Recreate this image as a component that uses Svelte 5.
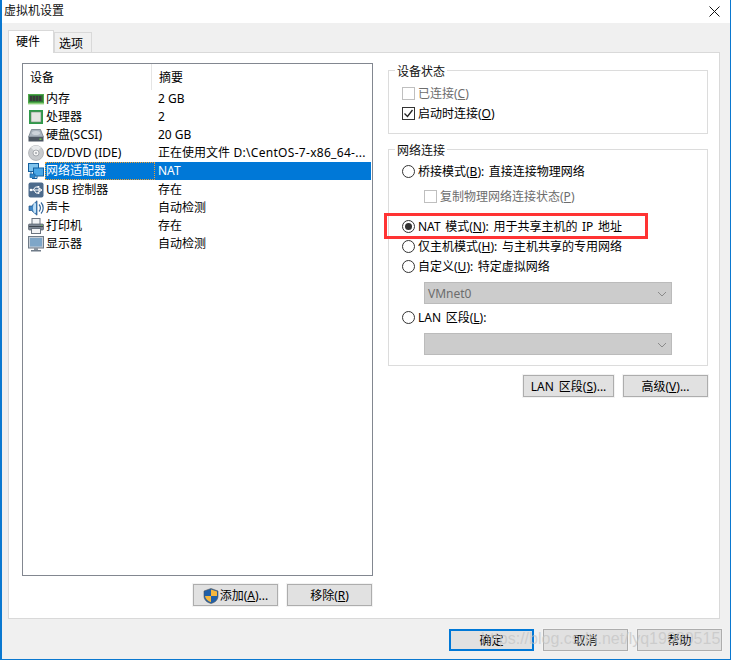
<script>
  const rows = [
    { id: 'ram', name: '内存', sum: '2 GB' },
    { id: 'cpu', name: '处理器', sum: '2' },
    { id: 'hdd', name: '硬盘(SCSI)', sum: '20 GB' },
    { id: 'cd', name: 'CD/DVD (IDE)', sum: '正在使用文件', path: ' D:\\CentOS-7-x86_64-...' },
    { id: 'net', name: '网络适配器', sum: 'NAT', sel: true },
    { id: 'usb', name: 'USB 控制器', sum: '存在' },
    { id: 'snd', name: '声卡', sum: '自动检测' },
    { id: 'prn', name: '打印机', sum: '存在' },
    { id: 'mon', name: '显示器', sum: '自动检测' }
  ];
</script>

{#snippet icon(id)}
  <svg class="ico" viewBox="0 0 16 16" width="16" height="16">
    {#if id === 'ram'}
      <rect x="0" y="3" width="16" height="10" fill="#4fa84a" />
      <rect x="1" y="4" width="14" height="7" fill="#2f7a35" />
      <rect x="2" y="5" width="2.4" height="5" fill="#3a3a3a" /><rect x="5" y="5" width="2.4" height="5" fill="#3a3a3a" /><rect x="8" y="5" width="2.4" height="5" fill="#3a3a3a" /><rect x="11" y="5" width="2.4" height="5" fill="#3a3a3a" />
      <rect x="0" y="12" width="16" height="1.4" fill="#8fd07d" />
    {:else if id === 'cpu'}
      <rect x="1" y="1" width="14" height="14" fill="#2f9a4a" />
      <rect x="3" y="3" width="10" height="10" fill="#e4e6e2" stroke="#6f8a72" stroke-width="0.6" />
    {:else if id === 'hdd'}
      <path d="M3.5 2.5h9L15.5 10H.5z" fill="#a9b3bd" stroke="#66717c" stroke-width="0.7" />
      <rect x="0.5" y="10" width="15" height="4.5" fill="#4d5763" />
      <rect x="11.5" y="11.5" width="2" height="1.4" fill="#70d050" />
      <ellipse cx="8" cy="6" rx="4" ry="2" fill="#ccd3da" />
    {:else if id === 'cd'}
      <circle cx="8" cy="8" r="7.5" fill="#c8cbce" stroke="#9a9ea2" stroke-width="0.6" />
      <path d="M8 8L3 2.5A7 7 0 0 1 13 2.5z" fill="#e8eaec" />
      <circle cx="8" cy="8" r="3" fill="#f4f4f4" stroke="#8d9196" stroke-width="0.7" />
      <circle cx="8" cy="8" r="1.1" fill="#a9adb1" />
    {:else if id === 'net'}
      <rect x="0.5" y="0.5" width="10" height="8" fill="#7fc4ef" stroke="#14609f" />
      <rect x="5.5" y="5" width="10" height="8" fill="#4aa7e6" stroke="#14609f" />
      <rect x="2" y="11" width="5" height="3.5" fill="#2e88cc" stroke="#14609f" stroke-width="0.7" />
      <path d="M3 9v2M9 13v2.5H4" stroke="#14609f" fill="none" />
    {:else if id === 'usb'}
      <rect x="0.5" y="0.5" width="15" height="15" rx="2" fill="#4d6b8c" />
      <path d="M2.5 8H13M11 6l3 2-3 2zM5 8l2.5-3H10M6 8l2 3h2" stroke="#fff" stroke-width="1" fill="none" />
      <circle cx="3" cy="8" r="1.3" fill="#fff" /><rect x="9.5" y="4" width="1.8" height="1.8" fill="#fff" /><circle cx="10.5" cy="11" r="1" fill="#fff" />
    {:else if id === 'snd'}
      <path d="M1 6H3.500L9 .8V15.200L3.500 10.500H1z" fill="#3f86c6" stroke="#1f4d80" stroke-width="0.7" />
      <path d="M5 7.500a2 5 0 0 1 3-4v9a2 5 0 0 1-3-4z" fill="#bfe0f7" />
      <path d="M11 4.500a5 5 0 0 1 0 7M13 2.500a8 8 0 0 1 0 11" stroke="#36699c" stroke-width="1.200" fill="none" />
    {:else if id === 'prn'}
      <rect x="4" y="0.500" width="8" height="6" fill="#f2f3f5" stroke="#6b7480" />
      <rect x="0.500" y="6" width="15" height="6" rx="1" fill="#7e8894" stroke="#555e6a" stroke-width="0.700" />
      <rect x="1" y="8" width="14" height="1" fill="#3e464f" />
      <rect x="3.500" y="10.500" width="9" height="5" fill="#f2f3f5" stroke="#6b7480" />
      <rect x="13" y="6.800" width="1.300" height="1" fill="#6fd050" />
    {:else if id === 'mon'}
      <rect x="0.500" y="0.500" width="15" height="11.500" fill="#c5ced8" stroke="#6f7b88" />
      <rect x="2" y="2" width="12" height="8.500" fill="#7ea6c8" />
      <rect x="6" y="12" width="4" height="2" fill="#8b95a0" />
      <rect x="3" y="14" width="10" height="1.500" fill="#6f7b88" />
    {/if}
  </svg>
{/snippet}

<div class="window">
  <header class="title">
    <span>虚拟机设置</span>
    <svg class="close" viewBox="0 0 11 11" width="11" height="11"><path d="M.5.5l10 10M10.500.5l-10 10" stroke="#111" stroke-width="1" fill="none" /></svg>
  </header>

  <div class="body">
    <div class="tabs">
      <div class="tab active">硬件</div>
      <div class="tab">选项</div>
    </div>

    <div class="panel">
      <section class="left">
        <div class="list">
          <div class="listhead">
            <div class="hcell first">设备</div>
            <div class="hcell">摘要</div>
          </div>
          {#each rows as r}
            <div class="row">
              <div class="rowicon">{@render icon(r.id)}</div>
              <div class="name" class:sel={r.sel}>{r.name}</div>
              <div class="sum" class:sel2={r.sel}>{r.sum}{#if r.path}<span class="path">{r.path}</span>{/if}</div>
            </div>
          {/each}
        </div>
        <div class="leftbtns">
          <button class="btn wide">
            <svg viewBox="0 0 16 16" width="16" height="16"><path d="M8 .5L15 3v5c0 4-3 6.500-7 7.500C4 14.500 1 12 1 8V3z" fill="#1f5fa8" stroke="#555" stroke-width="0.600" /><path d="M8 1.500V8h6V3.500zM8 8H2c.300 3 2.800 5.200 6 6.200z" fill="#f6b73c" /></svg>
            <span>添加(<u>A</u>)...</span>
          </button>
          <button class="btn wide"><span>移除(<u>R</u>)</span></button>
        </div>
      </section>

      <section class="right">
        <fieldset class="status">
          <legend>设备状态</legend>
          <label class="opt dis"><span class="check"></span>已连接(<u>C</u>)</label>
          <label class="opt"><span class="check on"><svg viewBox="0 0 11 11" width="11" height="11"><path d="M1.500 5.500l3 3 5-6.500" stroke="#222" stroke-width="1.300" fill="none" /></svg></span>启动时连接(<u>O</u>)</label>
        </fieldset>

        <fieldset class="netconn">
          <legend>网络连接</legend>
          <label class="opt"><span class="radio"></span>桥接模式(<u>B</u>): 直接连接物理网络</label>
          <label class="opt dis sub"><span class="check"></span>复制物理网络连接状态(<u>P</u>)</label>
          <label class="opt nat"><span class="radio on"></span>NAT 模式(<u>N</u>): 用于共享主机的 IP 地址</label>
          <label class="opt"><span class="radio"></span>仅主机模式(<u>H</u>): 与主机共享的专用网络</label>
          <label class="opt"><span class="radio"></span>自定义(<u>U</u>): 特定虚拟网络</label>
          <div class="select">
            <span>VMnet0</span>
            <svg viewBox="0 0 10 6" width="10" height="6"><path d="M1 1l4 4 4-4" stroke="#8a8a8a" fill="none" /></svg>
          </div>
          <label class="opt lan"><span class="radio"></span>LAN 区段(<u>L</u>):</label>
          <div class="select">
            <span></span>
            <svg viewBox="0 0 10 6" width="10" height="6"><path d="M1 1l4 4 4-4" stroke="#8a8a8a" fill="none" /></svg>
          </div>
          <div class="redbox"></div>
        </fieldset>

        <div class="rightbtns">
          <button class="btn lanbtn">LAN 区段(<u>S</u>)...</button>
          <button class="btn advbtn">高级(<u>V</u>)...</button>
        </div>
      </section>
    </div>

    <footer class="foot">
      <button class="btn big default">确定</button>
      <button class="btn big">取消</button>
      <button class="btn big">帮助</button>
      <div class="mark">https://blog.csdn.net/lyq19980515</div>
    </footer>
  </div>
</div>

<style>
  :global(body) {
    margin: 0;
    background: #fff;
  }
  .window {
    width: 731px;
    height: 660px;
    box-sizing: border-box;
    border: 1px solid #0a78d0;
    border-top: 0;
    border-left-width: 2px;
    display: flex;
    flex-direction: column;
    font: 12px/16px "Noto Sans", "Noto Sans CJK SC", sans-serif;
    color: #000;
    background: #f0f0f0;
  }
  .title {
    height: 23px;
    flex: none;
    background: #fff;
    display: flex;
    align-items: center;
    justify-content: space-between;
    padding: 0 10px 1px 2px;
    box-sizing: border-box;
    color: #111;
  }
  .body {
    flex: 1;
    display: flex;
    flex-direction: column;
    padding: 7px 10px 0 6px;
    min-height: 0;
  }
  .tabs {
    display: flex;
    align-items: flex-end;
    height: 22px;
    flex: none;
    position: relative;
    z-index: 1;
  }
  .tab {
    box-sizing: border-box;
    height: 20px;
    width: 38px;
    border: 1px solid #d9d9d9;
    border-bottom: 0;
    background: #f0f0f0;
    text-align: center;
    line-height: 21px;
    padding-right: 4px;
  }
  .tab.active {
    width: 46px;
    height: 23px;
    margin-bottom: -1px;
    background: #fff;
    line-height: 22px;
    padding-right: 6px;
  }
  .panel {
    box-sizing: border-box;
    height: 567px;
    flex: none;
    background: #fff;
    border: 1px solid #d9d9d9;
    display: flex;
    padding: 10px 11px 0 13px;
  }
  .left {
    width: 351px;
    flex: none;
  }
  .list {
    box-sizing: border-box;
    height: 513px;
    border: 1px solid #828790;
  }
  .listhead {
    display: flex;
    height: 25.500px;
  }
  .hcell {
    padding: 6px 0 0 7px;
    line-height: 16px;
  }
  .hcell.first {
    width: 121px;
    border-right: 1px solid #e5e5e5;
  }
  .row {
    display: flex;
    height: 18.200px;
    align-items: center;
    padding-left: 5px;
  }
  .rowicon {
    width: 17px;
    height: 16px;
    flex: none;
  }
  .ico {
    display: block;
  }
  .name {
    width: 110px;
    flex: none;
    height: 18px;
    line-height: 18px;
    padding-left: 1px;
    box-sizing: border-box;
    white-space: nowrap;
  }
  .sum {
    padding-left: 3px;
    flex: 1;
    height: 18px;
    line-height: 18px;
    white-space: pre;
    overflow: hidden;
  }
  .path {
    letter-spacing: 0.300px;
  }
  .name.sel {
    background: #0078d7;
    color: #fff;
    outline: 1px dotted #f0a030;
    outline-offset: -1px;
  }
  .sum.sel2 {
    background: #0078d7;
    color: #fff;
    margin-right: 1px;
  }
  .leftbtns {
    display: flex;
    justify-content: flex-end;
    gap: 9px;
    margin-top: 8px;
    padding-right: 1px;
  }
  .btn {
    box-sizing: border-box;
    border: 1px solid #adadad;
    outline: 1px solid #f3f3f3;
    background: #e1e1e1;
    font: inherit;
    color: #000;
    padding: 1px 0 0;
    display: flex;
    align-items: center;
    justify-content: center;
    white-space: pre;
    word-spacing: 2px;
  }
  .wide {
    width: 85px;
    height: 22px;
    gap: 1px;
  }
  .right {
    margin-left: 15px;
    width: 320px;
    flex: none;
    display: flex;
    flex-direction: column;
  }
  fieldset {
    margin: 0;
    padding: 0;
    border: 1px solid #dcdcdc;
    box-sizing: border-box;
    min-width: 0;
    position: relative;
  }
  legend {
    padding: 3px 2px 0;
    margin-left: -7px;
    line-height: 16px;
    color: #111;
  }
  .status {
    height: 73px;
    margin-top: -2px;
    padding: 3px 0 0 13px;
  }
  .netconn {
    height: 226px;
    margin-top: 6px;
    padding: 2px 0 0 13px;
  }
  .opt {
    display: flex;
    align-items: center;
    box-sizing: border-box;
    height: 20px;
    padding-top: 2px;
    white-space: pre;
    word-spacing: 1.500px;
  }
  .opt.dis {
    color: #6d6d6d;
  }
  .opt.sub {
    margin: 2px 0 0 22px;
    height: 26px;
  }
  .opt.nat {
    margin-top: 7px;
  }
  .opt.lan {
    margin-top: 3px;
  }
  .check {
    box-sizing: border-box;
    width: 13px;
    height: 13px;
    border: 1px solid #bfbfbf;
    margin: 0 3px 2px 0;
    flex: none;
    display: flex;
    align-items: center;
    justify-content: center;
  }
  .check.on {
    border-color: #333;
  }
  .radio {
    box-sizing: border-box;
    width: 13px;
    height: 13px;
    border: 1px solid #333;
    border-radius: 50%;
    margin: 0 3px 2px 0;
    flex: none;
    display: flex;
    align-items: center;
    justify-content: center;
  }
  .radio.on::after {
    content: "";
    width: 7px;
    height: 7px;
    border-radius: 50%;
    background: #333;
  }
  .select {
    box-sizing: border-box;
    width: 248px;
    height: 22px;
    margin: 6px 0 0 22px;
    background: #cccccc;
    border: 1px solid #bbb;
    color: #6d6d6d;
    display: flex;
    align-items: center;
    justify-content: space-between;
    padding: 1px 4px 0 3px;
  }
  .redbox {
    position: absolute;
    left: -5px;
    top: 54px;
    width: 258px;
    height: 20px;
    border: 3px solid #f33;
    pointer-events: none;
  }
  .rightbtns {
    display: flex;
    justify-content: flex-end;
    gap: 9px;
    margin-top: 9px;
  }
  .lanbtn {
    width: 91px;
    height: 22px;
  }
  .advbtn {
    width: 85px;
    height: 22px;
  }
  .foot {
    display: flex;
    justify-content: flex-end;
    gap: 9px;
    padding: 10px 0 0 0;
    margin-right: -2px;
    position: relative;
  }
  .big {
    width: 85px;
    height: 22px;
    padding-top: 2px;
  }
  .default {
    border: 2px solid #0078d7;
    outline: 0;
  }
  .mark {
    position: absolute;
    left: 473px;
    top: 9px;
    white-space: nowrap;
    font: 16px/22px "Liberation Sans", sans-serif;
    color: rgba(195, 195, 195, 0.7);
    pointer-events: none;
  }
</style>
